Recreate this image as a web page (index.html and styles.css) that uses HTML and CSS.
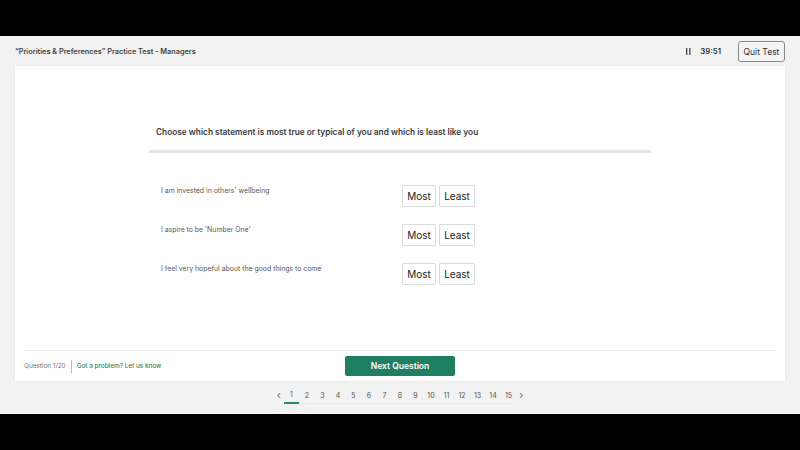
FILE: index.html
```html
<!DOCTYPE html>
<html lang="en">
<head>
    <meta charset="UTF-8">
    <meta name="viewport" content="width=device-width, initial-scale=1.0">
    <title>Practice Test</title>
    <link rel="stylesheet" href="styles.css">
</head>
<body>
    <div class="screen">
        <div class="topbar">
            <div class="test-title">“Priorities &amp; Preferences” Practice Test - Managers</div>
            <div class="timer">
                <svg class="pause" width="5" height="7" viewBox="0 0 5 7"><rect x="0" y="0" width="1.3" height="7" fill="#444"/><rect x="3.2" y="0" width="1.3" height="7" fill="#444"/></svg>
                <span>39:51</span>
            </div>
            <button class="quit">Quit Test</button>
        </div>

        <div class="card">
            <div class="question">
                <h1 class="prompt">Choose which statement is most true or typical of you and which is least like you</h1>
                <div class="divider"></div>
                <div class="rows">
                    <div class="row">
                        <div class="statement">I am invested in others' wellbeing</div>
                        <div class="choices">
                            <button class="choice most">Most</button>
                            <button class="choice">Least</button>
                        </div>
                    </div>
                    <div class="row">
                        <div class="statement">I aspire to be 'Number One'</div>
                        <div class="choices">
                            <button class="choice most">Most</button>
                            <button class="choice">Least</button>
                        </div>
                    </div>
                    <div class="row">
                        <div class="statement">I feel very hopeful about the good things to come</div>
                        <div class="choices">
                            <button class="choice most">Most</button>
                            <button class="choice">Least</button>
                        </div>
                    </div>
                </div>
            </div>

            <div class="footer">
                <div class="info">
                    <span class="count">Question 1/20</span>
                    <span class="sep"></span>
                    <a class="problem" href="#">Got a problem? Let us know</a>
                </div>
                <button class="next">Next Question</button>
                <div></div>
            </div>
        </div>

        <div class="pager">
            <span class="arrow">&lsaquo;</span>
            <span class="page current">1</span>
            <span class="page">2</span>
            <span class="page">3</span>
            <span class="page">4</span>
            <span class="page">5</span>
            <span class="page">6</span>
            <span class="page">7</span>
            <span class="page">8</span>
            <span class="page">9</span>
            <span class="page">10</span>
            <span class="page">11</span>
            <span class="page">12</span>
            <span class="page">13</span>
            <span class="page">14</span>
            <span class="page">15</span>
            <span class="arrow">&rsaquo;</span>
        </div>
    </div>
</body>
</html>
```

FILE: styles.css
```css
* {
    box-sizing: border-box;
}

body {
    margin: 0;
    background-color: #000;
    font-family: 'Inter', 'Liberation Sans', sans-serif;
    padding: 36px 0;
    height: 450px;
    overflow: hidden;
}

.screen {
    background-color: #f2f2f2;
    height: 378px;
}

.topbar {
    height: 30px;
    display: flex;
    align-items: center;
    padding: 0 15px;
}

.test-title {
    font-size: 7.3px;
    font-weight: 600;
    color: #444;
    flex: 1;
}

.timer {
    display: flex;
    align-items: center;
    gap: 9px;
    font-size: 7.8px;
    font-weight: 600;
    color: #333;
    margin-right: 17px;
}

.pause {
    display: block;
}

.quit {
    font-family: inherit;
    font-size: 8.5px;
    color: #333;
    background: #f4f4f4;
    border: 1px solid #8a8a8a;
    border-radius: 3px;
    width: 47px;
    height: 21px;
    padding: 0;
    margin-top: 1px;
}

.card {
    margin: 0 15px;
    height: 315px;
    background-color: #fefefe;
    box-shadow: 0 0 2px rgba(0, 0, 0, 0.08);
    display: flex;
    flex-direction: column;
}

.question {
    flex: 1;
    width: 502px;
    margin: 0 auto;
    padding-top: 60px;
}

.prompt {
    margin: 0;
    padding-left: 7px;
    font-size: 8.3px;
    line-height: 12px;
    font-weight: 600;
    color: #3a3a3a;
}

.divider {
    height: 3px;
    background-color: #e6e6e6;
    margin-top: 12px;
}

.rows {
    margin-top: 32px;
    padding-left: 12px;
    display: flex;
    flex-direction: column;
    gap: 17px;
}

.row {
    display: flex;
    align-items: flex-start;
}

.statement {
    width: 241px;
    font-size: 6.9px;
    line-height: 10px;
    color: #5a5a5a;
    padding-top: 1px;
}

.choices {
    display: flex;
    gap: 3px;
}

.choice {
    font-family: inherit;
    font-size: 10px;
    color: #222;
    background: #fff;
    border: 1px solid #dcdcdc;
    border-radius: 1px;
    height: 22px;
    width: 36px;
    padding: 0;
}

.choice.most {
    width: 34px;
}

.footer {
    margin: 0 9px;
    border-top: 1px solid #ececec;
    padding: 5px 0;
    display: grid;
    grid-template-columns: 1fr auto 1fr;
    align-items: center;
}

.info {
    display: flex;
    align-items: center;
    font-size: 6.4px;
}

.count {
    color: #777;
}

.sep {
    width: 1px;
    height: 13px;
    background-color: #bbb;
    margin: 0 5px;
}

.problem {
    color: #2b8a69;
    font-weight: 500;
    text-decoration: none;
}

.next {
    font-family: inherit;
    width: 110px;
    height: 20px;
    padding: 0;
    border: none;
    border-radius: 2px;
    background-color: #1f7f63;
    color: #fff;
    font-size: 8.5px;
    font-weight: 600;
}

.pager {
    display: flex;
    justify-content: center;
    align-items: center;
    height: 27px;
}

.arrow {
    font-size: 11px;
    color: #777;
    width: 10px;
    text-align: center;
    line-height: 10px;
}

.page {
    width: 15.5px;
    text-align: center;
    font-size: 7px;
    color: #555;
    padding: 2px 0 3px;
    border-bottom: 1px solid #eaeaea;
    margin-top: 3px;
}

.page.current {
    border-bottom: 2px solid #2b8a69;
}
```
